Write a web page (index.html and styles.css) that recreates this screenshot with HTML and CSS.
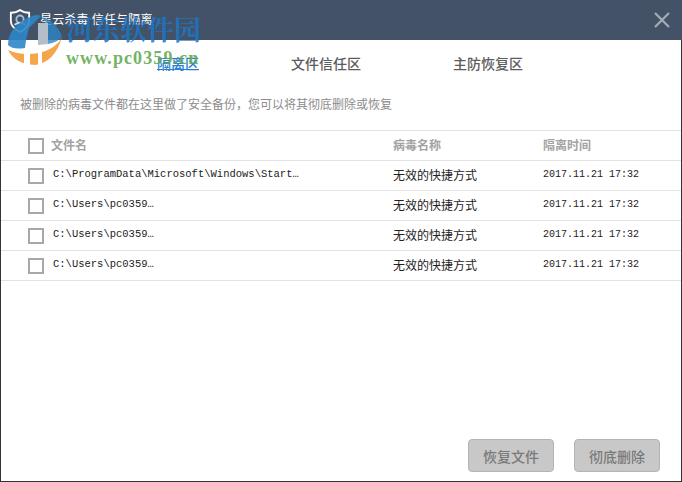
FILE: index.html
```html
<!DOCTYPE html>
<html lang="zh">
<head>
<meta charset="utf-8">
<title>云杀毒</title>
<link rel="stylesheet" href="styles.css">
</head>
<body>
<div class="window">
  <header class="titlebar">
    <svg class="shield" width="22" height="24" viewBox="0 0 24 26"><path d="M2 4 Q8 4 12 1 Q16 4 22 4 V13 Q22 20 12 25 Q2 20 2 13Z" fill="none" stroke="#fff" stroke-width="2"/><circle cx="12" cy="11" r="4" fill="none" stroke="#9fc3dc" stroke-width="2"/><path d="M6 17 Q12 13 18 17" fill="none" stroke="#cfe0ec" stroke-width="2"/></svg>
    <span class="title">星云杀毒 信任与隔离</span>
    <svg class="close" width="16" height="16" viewBox="0 0 16 16"><path d="M1 1 L15 15 M15 1 L1 15" stroke="#a3abb5" stroke-width="2.2"/></svg>
  </header>
  <nav class="tabs">
    <span class="tab active">隔离区</span>
    <span class="tab">文件信任区</span>
    <span class="tab">主防恢复区</span>
  </nav>
  <p class="desc">被删除的病毒文件都在这里做了安全备份，您可以将其彻底删除或恢复</p>
  <div class="table">
    <div class="row head">
      <span class="check"></span><span class="c-name">文件名</span><span class="c-virus">病毒名称</span><span class="c-time">隔离时间</span>
    </div>
    <div class="row">
      <span class="check"></span><span class="c-name path">C:\ProgramData\Microsoft\Windows\Start…</span><span class="c-virus">无效的快捷方式</span><span class="c-time mono">2017.11.21 17:32</span>
    </div>
    <div class="row">
      <span class="check"></span><span class="c-name path">C:\Users\pc0359…</span><span class="c-virus">无效的快捷方式</span><span class="c-time mono">2017.11.21 17:32</span>
    </div>
    <div class="row">
      <span class="check"></span><span class="c-name path">C:\Users\pc0359…</span><span class="c-virus">无效的快捷方式</span><span class="c-time mono">2017.11.21 17:32</span>
    </div>
    <div class="row">
      <span class="check"></span><span class="c-name path">C:\Users\pc0359…</span><span class="c-virus">无效的快捷方式</span><span class="c-time mono">2017.11.21 17:32</span>
    </div>
  </div>
  <footer class="actions">
    <button class="btn">恢复文件</button>
    <button class="btn">彻底删除</button>
  </footer>
  <div class="watermark">
    <svg class="wm-logo" width="60" height="56" viewBox="0 0 60 56">
      <path d="M3 38 Q10 52 30 53 Q50 50 57 25 Q52 36 34 41 Q16 44 3 38Z" fill="#f5a54a"/>
      <rect x="19" y="40" width="6" height="15" fill="#fff"/>
      <rect x="33" y="38" width="4" height="17" fill="#fff"/>
      <path d="M3 33 Q3 14 27 4 Q32 2 36 4 L24 16 L21 28 L20 36 Q8 38 3 33Z" fill="#2c86c8" opacity=".9"/>
      <path d="M36 5 Q50 8 57 24 Q54 30 43 32 V12Z" fill="#2c86c8" opacity=".8"/>
      <path d="M33 11 L43 11 V32 L33 33Z" fill="#b4bec8"/>
    </svg>
    <div class="wm-text">
      <div class="wm-cn">河东软件园</div>
      <div class="wm-url">www.pc0359.cn</div>
    </div>
  </div>
</div>
</body>
</html>
```
FILE: styles.css
```css
* { box-sizing: border-box; }
html, body { margin: 0; padding: 0; }
body { width: 682px; height: 482px; overflow: hidden; background: #fff; }
.window {
  position: relative;
  width: 682px;
  height: 482px;
  display: flex;
  flex-direction: column;
  background: #fff;
  border-left: 1px solid #333;
  border-right: 1px solid #333;
  border-bottom: 1px solid #333;
  font-family: "Noto Sans CJK SC", "Liberation Sans", sans-serif;
}
.titlebar {
  height: 40px;
  margin: 0 -1px;
  flex: none;
  background: #435266;
  display: flex;
  align-items: center;
  padding: 0 12px 0 9px;
  color: #fff;
}
.shield { flex: none; margin-top: 2px; }
.title { font-size: 12px; letter-spacing: .2px; margin-left: 9px; margin-top: -3px; white-space: nowrap; }
.close { margin-left: auto; }
.tabs {
  height: 46px;
  flex: none;
  display: flex;
  align-items: center;
  font-size: 14px;
  color: #5c5c5c;
  padding-left: 156px;
}
.tab { white-space: nowrap; font-weight: 500; }
.tab:nth-child(2) { margin-left: 92px; }
.tab:nth-child(3) { margin-left: 92px; }
.tab.active { color: #2a7fd4; text-decoration: underline; text-underline-offset: 0; }
.desc {
  margin: 0;
  height: 44px;
  flex: none;
  padding: 9px 0 0 19px;
  font-size: 12px;
  line-height: 18px;
  color: #8c8c8c;
}
.table { flex: none; border-top: 1px solid #e3e3e3; }
.row {
  height: 30px;
  display: flex;
  align-items: center;
  border-bottom: 1px solid #e3e3e3;
  padding-left: 27px;
  font-size: 12px;
  color: #222;
}
.head { height: 30px; font-weight: 700; color: #a3a3a3; }
.row span:not(.check) { padding-bottom: 3px; }
.check {
  flex: none;
  width: 16px;
  height: 16px;
  border: 2px solid #a8a8a8;
  background: #fff;
}
.c-name { width: 341px; margin-left: 8px; white-space: nowrap; }
.head .c-name { margin-left: 7px; width: 342px; }
.row .path { font-family: "Liberation Mono", monospace; font-size: 10.5px; padding-left: 1px; padding-bottom: 1px; }
.c-virus { width: 150px; white-space: nowrap; }
.c-time { white-space: nowrap; }
.row .mono { font-family: "Liberation Mono", monospace; font-size: 10px; padding-bottom: 1px; }
.actions {
  margin-top: auto;
  display: flex;
  justify-content: flex-end;
  gap: 20px;
  padding: 0 21px 9px 0;
}
.btn {
  width: 86px;
  height: 33px;
  border: 1px solid #b4b4b4;
  border-radius: 4px;
  background: #c8c8c8;
  color: #7a7a7a;
  font-family: inherit;
  font-size: 14px;
  font-weight: 500;
  padding: 0;
}
.watermark {
  position: absolute;
  left: 4px;
  top: 12px;
  display: flex;
  pointer-events: none;
}
.wm-logo { flex: none; }
.wm-text { margin-left: 1px; margin-top: -2px; }
.wm-cn {
  font-family: "Noto Serif CJK SC", "Noto Sans CJK SC", serif;
  font-size: 27px;
  line-height: 38px;
  font-weight: 700;
  color: rgba(28, 118, 198, .85);
  white-space: nowrap;
}
.wm-url {
  font-family: "Liberation Serif", serif;
  font-size: 18px;
  line-height: 20px;
  font-weight: 700;
  color: rgba(96, 170, 80, .9);
  letter-spacing: 1.1px;
  white-space: nowrap;
}
```
